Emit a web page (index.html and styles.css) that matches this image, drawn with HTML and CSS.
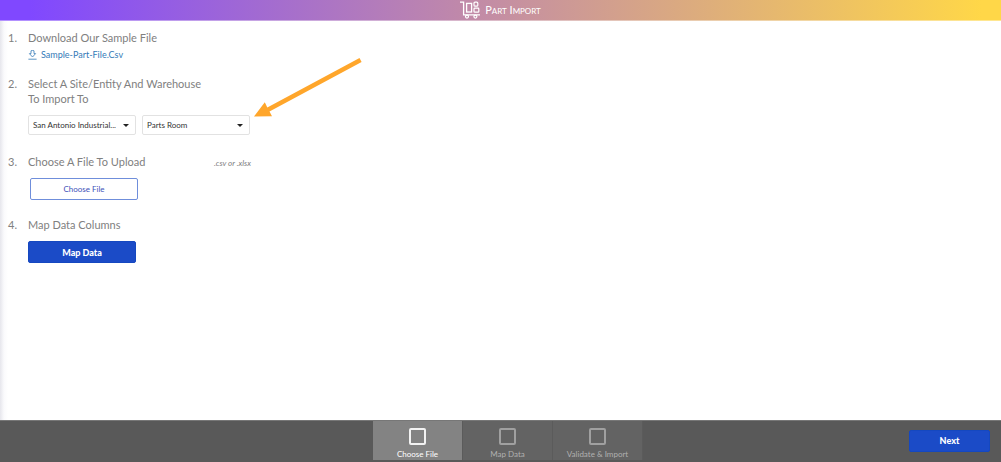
FILE: index.html
```html
<!DOCTYPE html>
<html lang="en">
<head>
<meta charset="utf-8">
<meta name="viewport" content="width=device-width, initial-scale=1">
<title>Part Import</title>
<link rel="stylesheet" href="styles.css">
</head>
<body>
<header class="topbar">
  <svg class="cart" viewBox="0 0 20 18" fill="none" stroke="currentColor" aria-hidden="true">
    <path d="M0 1.2H3.6V13.8H20" stroke-width="1.3"/>
    <rect x="6.6" y="2.4" width="5" height="8.6" stroke-width="1.3"/>
    <rect x="14" y="1.2" width="3.8" height="4" rx="1" stroke-width="1.2"/>
    <rect x="14" y="7.2" width="4.8" height="4" rx=".8" stroke-width="1.2"/>
    <circle cx="7" cy="15.6" r="1.5" stroke-width="1.2"/>
    <circle cx="15.4" cy="15.6" r="1.5" stroke-width="1.2"/>
  </svg>
  <h1 class="title">Part Import</h1>
</header>
<main class="content">
  <ol class="steps">
    <li class="step">
      <h2 class="step-title">Download Our Sample File</h2>
      <a class="download" href="#sample">
        <svg class="download-icon" viewBox="0 0 9 10" fill="none" stroke="currentColor" stroke-width=".8" aria-hidden="true">
          <path d="M3 .8Q4.5 0 6 .8V3.6H7.6L4.5 7 1.4 3.6H3ZM.4 9.2H8.6"/>
        </svg>
        Sample-Part-File.Csv</a>
    </li>
    <li class="step">
      <h2 class="step-title">Select A Site/Entity And Warehouse To Import To</h2>
      <div class="selects">
        <div class="select-box"><select class="select" aria-label="Site or entity"><option>San Antonio Industrial...</option></select></div>
        <div class="select-box"><select class="select" aria-label="Warehouse"><option>Parts Room</option></select></div>
      </div>
    </li>
    <li class="step">
      <div class="title-row">
        <h2 class="step-title">Choose A File To Upload</h2>
        <span class="hint">.csv or .xlsx</span>
      </div>
      <button class="button button-outline" type="button">Choose File</button>
    </li>
    <li class="step">
      <h2 class="step-title">Map Data Columns</h2>
      <button class="button button-solid" type="button">Map Data</button>
    </li>
  </ol>
  <svg class="arrow" viewBox="0 0 108 60" aria-hidden="true">
    <path d="M0 59.5 10.8 45.2 13.3 50.4 105.5 1 107.6 5 15.5 54.6 18 59.2Z" fill="#ffa62b"/>
  </svg>
</main>
<footer class="footer">
  <nav class="tabs" aria-label="Import progress">
    <button class="tab tab-active" type="button"><span class="box"></span>Choose File</button>
    <button class="tab" type="button"><span class="box"></span>Map Data</button>
    <button class="tab" type="button"><span class="box"></span>Validate &amp; Import</button>
  </nav>
  <button class="button button-solid next" type="button">Next</button>
</footer>
</body>
</html>
```
FILE: styles.css
```css
* {
  box-sizing: border-box;
}

body {
  margin: 0;
  min-height: 100vh;
  display: flex;
  flex-direction: column;
  background: #fff;
  color: #808080;
  font-family: Lato, "Open Sans", sans-serif;
}

button,
select {
  font-family: inherit;
}

.topbar {
  height: 21px;
  display: flex;
  align-items: center;
  justify-content: center;
  gap: 5px;
  color: #fff;
  background: linear-gradient(90deg, #8048ff 0%, #8048ff 3%, #c18aa8 47%, #ffd748 98%);
  border-bottom: 1px solid rgba(255, 255, 255, 0.4);
}

.cart {
  width: 20px;
  height: 18px;
}

.title {
  margin: 0;
  font-size: 11px;
  line-height: 18px;
  font-weight: 400;
  font-variant: small-caps;
}

.content {
  flex: 1;
  position: relative;
  padding: 9px 8px;
  background: linear-gradient(90deg, #e6e6ec 0, #fafafc 4px, #fff 8px);
}

.steps {
  width: 243px;
  margin: 0;
  padding: 0;
  display: flex;
  flex-direction: column;
  gap: 15px;
  list-style: none;
  counter-reset: step;
}

.step {
  position: relative;
  padding-left: 20px;
  counter-increment: step;
}

.step::before {
  content: counter(step) ".";
  position: absolute;
  left: 0;
  top: 0;
  font-size: 11px;
  line-height: 15px;
}

.step-title {
  margin: 0 0 9px;
  max-width: 184px;
  font-size: 11px;
  line-height: 15px;
  font-weight: 400;
}

.title-row {
  display: flex;
  justify-content: space-between;
}

.hint {
  font-size: 8px;
  line-height: 18px;
  font-style: italic;
}

.download {
  display: flex;
  align-items: center;
  gap: 4px;
  margin-top: -5px;
  color: #337ab7;
  font-size: 9px;
  line-height: 12px;
  text-decoration: none;
}

.download-icon {
  width: 9px;
  height: 10px;
}

.selects {
  display: flex;
  gap: 6px;
  padding-bottom: 4px;
}

.select-box {
  position: relative;
  width: 108px;
}

.select-box::after {
  content: "";
  position: absolute;
  right: 7px;
  top: 9px;
  border: 3px solid transparent;
  border-top-color: #222;
  border-bottom: 0;
  pointer-events: none;
}

.select {
  display: block;
  width: 100%;
  height: 20px;
  padding: 0 16px 0 4px;
  appearance: none;
  border: 1px solid #e2e2e2;
  border-radius: 2px;
  background: #fff;
  color: #333;
  font-size: 8px;
}

.button {
  display: block;
  width: 108px;
  height: 22px;
  padding: 0;
  border-radius: 2px;
  font-size: 8px;
}

.button-outline {
  margin: 0 0 2px 2px;
  border: 1px solid #6f8edb;
  background: #fff;
  color: #4050b8;
}

.button-solid {
  border: 1px solid #1548c0;
  background: #1b4bc7;
  color: #fff;
  font-size: 9px;
  font-weight: 900;
}

.arrow {
  position: absolute;
  left: 254px;
  top: 36px;
  width: 108px;
  height: 60px;
}

.footer {
  height: 42px;
  display: grid;
  grid-template-columns: 1fr auto 1fr;
  align-items: center;
  padding: 0 11px 2px 26px;
  border-top: 1px solid #777;
  background: #595959;
}

.tabs {
  height: 100%;
  display: flex;
  grid-column: 2;
}

.tab {
  width: 90px;
  display: flex;
  flex-direction: column;
  align-items: center;
  gap: 3px;
  padding: 7px 0 0;
  border: 0;
  border-right: 1px solid #5b5b5b;
  background: #636363;
  color: #b0b0b0;
  font-size: 8px;
  line-height: 12px;
}

.tab-active {
  background: #838383;
  color: #fff;
}

.box {
  width: 17px;
  height: 17px;
  border: 2px solid #a0a0a0;
  border-radius: 2px;
}

.tab-active .box {
  border-color: #f2f2f2;
}

.next {
  width: 81px;
  justify-self: end;
}
```
